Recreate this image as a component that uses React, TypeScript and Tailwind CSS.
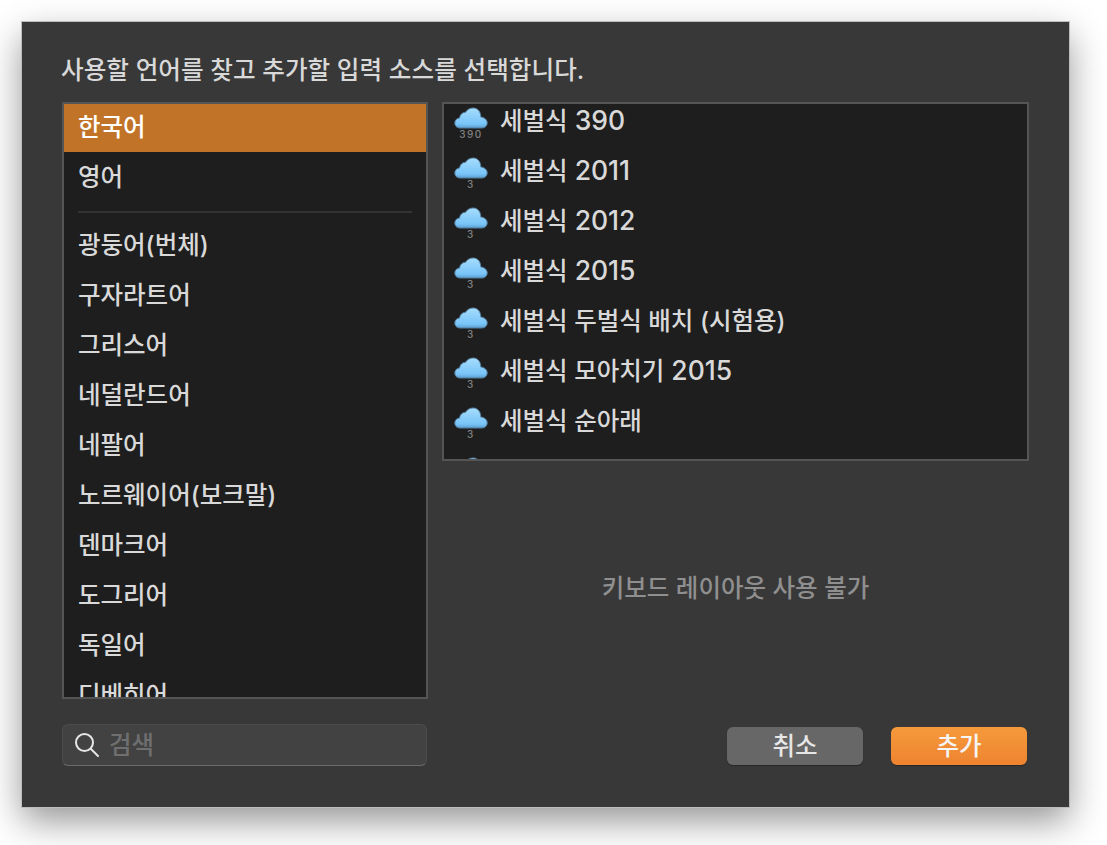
import React from "react";

const font = "font-['Inter','Noto_Sans_CJK_KR',sans-serif]";

const languages = ["광둥어(번체)", "구자라트어", "그리스어", "네덜란드어", "네팔어", "노르웨이어(보크말)", "덴마크어", "도그리어", "독일어", "디베히어"];

const sources = [
  { name: "세벌식", num: "390", badge: "390" },
  { name: "세벌식", num: "2011", badge: "3" },
  { name: "세벌식", num: "2012", badge: "3" },
  { name: "세벌식", num: "2015", badge: "3" },
  { name: "세벌식 두벌식 배치 (시험용)", num: "", badge: "3" },
  { name: "세벌식 모아치기", num: "2015", badge: "3" },
  { name: "세벌식 순아래", num: "", badge: "3" },
  { name: "", num: "", badge: "" },
];

const CloudIcon: React.FC = () => (
  <svg width="34" height="22" viewBox="0 0 34 22" className="shrink-0">
    <defs>
      <linearGradient id="cloud" x1="0" y1="0" x2="0" y2="1">
        <stop offset="0" stopColor="#a6dcfd" />
        <stop offset="0.8" stopColor="#78c4f8" />
        <stop offset="1" stopColor="#5c9fd0" />
      </linearGradient>
    </defs>
    <path
      d="M6 21C2.8 21 .8 18.8 .8 16 .8 13.2 2.8 11.2 5.6 11 6 7.6 8.4 5.2 11.4 5.4 13 2.6 16 1 19 1 23 1 26 3.6 26.6 8 26.7 8.6 26.8 9.4 26.8 10 30.6 10.4 33.2 12.8 33.2 16 33.2 18.8 31 21 27.8 21Z"
      fill="url(#cloud)"
      stroke="#557f9e"
      strokeWidth="1"
    />
  </svg>
);

export default function App() {
  return (
    <div className={`w-[1107px] h-[845px] bg-white p-[22px] overflow-hidden ${font}`}>
      <div className="w-[1047px] h-[785px] bg-[#383838] shadow-[0_14px_34px_rgba(0,0,0,0.42)] outline outline-1 outline-[#bdbdbd] px-10 pt-[30px] flex flex-col">
        <h1 className="h-[36px] mb-[14px] -ml-[1px] text-[24.6px] leading-[36px] tracking-[0.05px] text-[#d9d9d9] font-medium">
          사용할 언어를 찾고 추가할 입력 소스를 선택합니다.
        </h1>

        <div className="flex gap-[14px] h-[597px]">
          <div className="w-[366px] h-full border-2 border-[#555555] bg-[#1e1e1e] overflow-hidden text-[24.5px] font-medium">
            <div className="h-12 bg-[#c17428] pl-[14px] pb-[2px] flex items-center text-white">한국어</div>
            <div className="h-[50px] pl-[14px] flex items-center text-[#d9d9d9]">영어</div>
            <div className="h-[19px] pt-[9px] px-[14px]">
              <div className="h-[2px] w-full bg-[#333333]" />
            </div>
            {languages.map((lang) => (
              <div key={lang} className="h-[50px] shrink-0 pl-[14px] pb-[2px] flex items-center text-[#d9d9d9]">
                {lang}
              </div>
            ))}
          </div>

          <div className="flex-1 flex flex-col">
            <div className="h-[359px] border-2 border-[#555555] bg-[#1e1e1e] overflow-hidden">
              <div className="-mt-[8px]">
                {sources.map((s, i) => (
                  <div key={i} className="h-[50px] flex items-center pl-[10px] text-[24.5px] font-medium text-[#d9d9d9]">
                    <div className="w-[34px] flex flex-col items-center -mb-[4px]">
                      <CloudIcon />
                      <span className="h-[11px] text-[10px] leading-[11px] tracking-[1.5px] text-[#808080]">{s.badge}</span>
                    </div>
                    <span className="ml-[12px]">
                      {s.name}
                      {s.num && <span className="ml-[7px] text-[26.5px] leading-none">{s.num}</span>}
                    </span>
                  </div>
                ))}
              </div>
            </div>
            <div className="flex-1 flex items-center justify-center pt-[17px] text-[24.5px] font-medium text-[#8f8f8f]">
              키보드 레이아웃 사용 불가
            </div>
          </div>
        </div>

        <div className="flex items-start justify-between mt-[25px] pr-[2px]">
          <div className="w-[365px] h-[42px] rounded-[6px] bg-[#424242] border border-[#4c4c4c] border-b-[#6a6a6a] flex items-center pl-[11px] gap-[9px]">
            <svg width="26" height="26" viewBox="0 0 26 26" fill="none" stroke="#e6e6e6" strokeWidth="2" strokeLinecap="round">
              <circle cx="10.5" cy="10.5" r="8.5" />
              <path d="M17 17l7 7" />
            </svg>
            <span className="text-[24.5px] font-medium text-[#6f6f6f]">검색</span>
          </div>
          <div className="flex gap-7 pt-[3px]">
            <button className="w-[136px] h-[38px] rounded-[6px] bg-[#676767] shadow-[0_1px_1px_rgba(0,0,0,0.3)] text-[24.5px] font-medium leading-none text-[#e6e6e6]">
              취소
            </button>
            <button className="w-[136px] h-[38px] rounded-[6px] bg-gradient-to-b from-[#f59a3b] to-[#ee8330] shadow-[0_1px_1px_rgba(0,0,0,0.3)] text-[24.5px] font-medium leading-none text-[#f5f5f5]">
              추가
            </button>
          </div>
        </div>
      </div>
    </div>
  );
}
